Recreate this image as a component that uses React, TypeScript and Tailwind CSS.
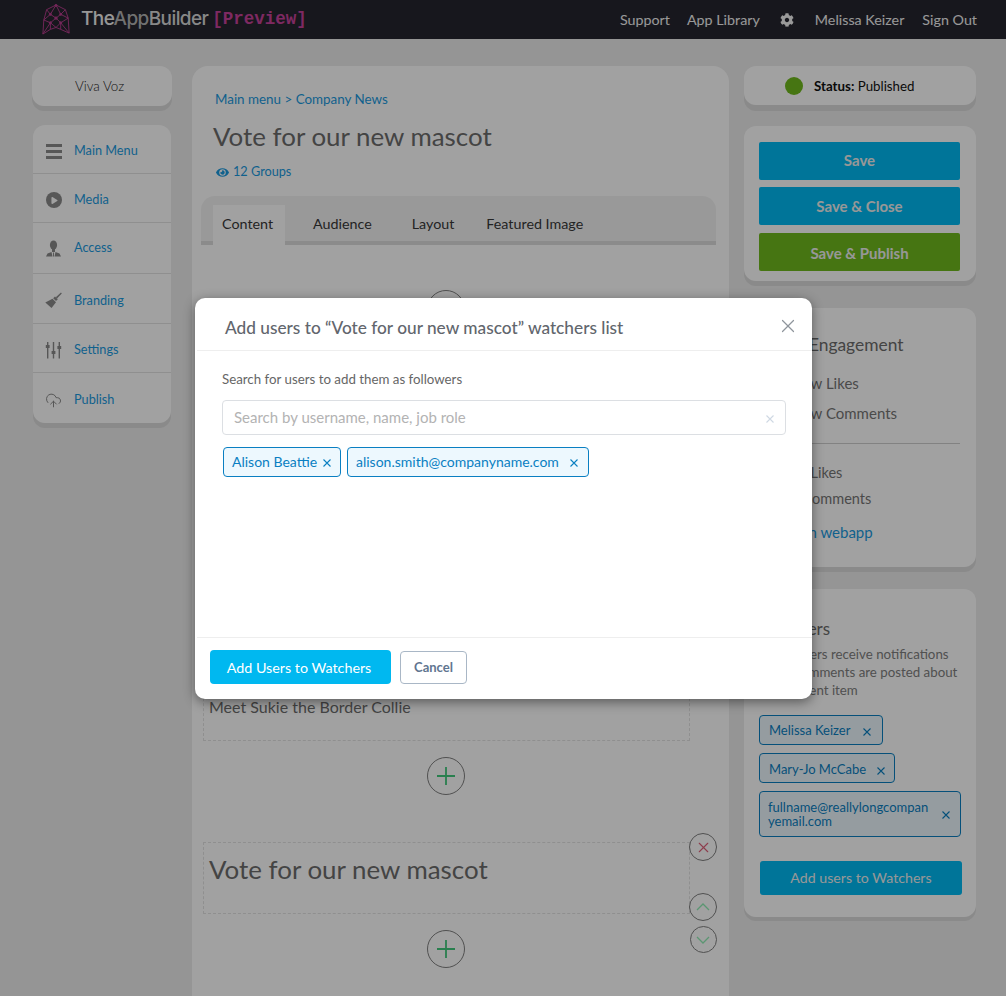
import { CloudUpload, X } from 'lucide-react';
import { FaCog, FaEye, FaPlay } from 'react-icons/fa';
import type { ReactNode } from 'react';

const Logo = () => (
  <svg width="30" height="31" viewBox="0 0 32 33" fill="none" stroke="#b83d8e" strokeWidth="1" className="shrink-0">
    <path d="M16 1 L26 6 L29 15 L30 31 L21 27 L16 25 L10 27 L2 32 L3 17 L6 6 Z" />
    <path d="M16 1 L10 11 L3 17 M16 1 L21 11 L29 15 M6 6 L10 11 L16 15 L21 11 L26 6 M3 17 L10 20 L16 15 L21 20 L29 15 M10 20 L16 25 L21 20 M10 20 L10 27 M21 20 L21 27 M2 32 L10 20 M30 31 L21 20" />
    <circle cx="16" cy="15" r="1.3" fill="#b83d8e" />
    <circle cx="10" cy="11" r="1.1" fill="#b83d8e" />
    <circle cx="21" cy="11" r="1.1" fill="#b83d8e" />
    <circle cx="16" cy="1.5" r="1.1" fill="#b83d8e" />
    <circle cx="21" cy="20" r="1.1" fill="#b83d8e" />
    <circle cx="10" cy="20" r="1.1" fill="#b83d8e" />
  </svg>
);

const Header = () => (
  <header className="flex h-[39px] items-center bg-[#25252f] pl-[41px] pr-[29px]">
    <Logo />
    <div className="ml-[10px] font-['Inter',sans-serif] text-[19px] font-medium tracking-[-0.6px]">
      <span className="text-[#f0f0f0]">The</span>
      <span className="text-[#b4b4b4]">App</span>
      <span className="text-[#d8d8d8]">Builder</span>
    </div>
    <div className="ml-[4px] font-['Liberation_Mono',monospace] text-[17.5px] font-bold text-[#c8429c]">[Preview]</div>
    <nav className="ml-auto flex items-center text-[14.3px] text-[#f2f2f2]">
      <span>Support</span>
      <span className="ml-[17px]">App Library</span>
      <FaCog className="ml-[20px] text-[14px]" />
      <span className="ml-[21px]">Melissa Keizer</span>
      <span className="ml-[18px]">Sign Out</span>
    </nav>
  </header>
);

const UserSuit = () => (
  <svg width="17" height="17" viewBox="0 0 17 17" fill="#8a8a8a">
    <ellipse cx="8.5" cy="5" rx="3.6" ry="4.6" />
    <rect x="7" y="9" width="3" height="3" />
    <path d="M1 16.5 L2.5 13.5 L6.5 12 L7.5 16.5 Z M16 16.5 L14.5 13.5 L10.5 12 L9.5 16.5 Z" />
    <rect x="8" y="12.5" width="1" height="4" />
  </svg>
);

const SlidersV = () => (
  <svg width="17" height="17" viewBox="0 0 17 17" fill="#8a8a8a">
    <rect x="2" y="0" width="1.4" height="16.5" />
    <rect x="7.8" y="0" width="1.4" height="16.5" />
    <rect x="13.6" y="0" width="1.4" height="16.5" />
    <rect x="0.8" y="3" width="3.8" height="3" />
    <rect x="6.6" y="9" width="3.8" height="3" />
    <rect x="12.4" y="4" width="3.8" height="3" />
  </svg>
);

const Brush = () => (
  <svg width="17" height="17" viewBox="0 0 17 17" fill="#8a8a8a">
    <path d="M16 0.5 L16.8 1.5 L12 6.5 L10.8 5.2 Z" />
    <path d="M10 4.5 L12.8 7.3 L11 9 L8.2 6.2 Z" />
    <path d="M7.5 6.8 L11 10.3 L6.5 16 L0.3 10.6 Z" />
  </svg>
);

const navItems: { label: string; icon: ReactNode; h: string; pt: string }[] = [
  {
    label: 'Main Menu',
    h: 'h-[49px]',
    pt: 'pt-[4px]',
    icon: (
      <div className="flex w-[16px] flex-col gap-[3px]">
        <div className="h-[3px] bg-[#8a8a8a]" />
        <div className="h-[3px] bg-[#8a8a8a]" />
        <div className="h-[3px] bg-[#8a8a8a]" />
      </div>
    ),
  },
  {
    label: 'Media',
    h: 'h-[49px]',
    pt: 'pt-[4px]',
    icon: (
      <div className="flex h-[16px] w-[16px] items-center justify-center rounded-full bg-[#8a8a8a]">
        <FaPlay className="ml-px text-[7px] text-white" />
      </div>
    ),
  },
  { label: 'Access', h: 'h-[51px]', pt: 'pt-0', icon: <UserSuit /> },
  { label: 'Branding', h: 'h-[50px]', pt: 'pt-[4px]', icon: <Brush /> },
  { label: 'Settings', h: 'h-[49px]', pt: 'pt-[4px]', icon: <SlidersV /> },
  { label: 'Publish', h: 'h-[50px]', pt: 'pt-[4px]', icon: <CloudUpload size={17} strokeWidth={1.4} className="text-[#8a8a8a]" /> },
];

const LeftColumn = () => (
  <aside className="w-[140px] shrink-0">
    <div className="flex h-[40px] items-center rounded-[12px] bg-white pl-[43px] pt-px text-[13.4px] font-light text-[#222] shadow-[0_5px_0_#dbdbdb]">
      Viva Voz
    </div>
    <div className="mx-px mt-[19px] rounded-[12px] bg-white shadow-[0_5px_0_#dbdbdb]">
      {navItems.map((item, i) => (
        <div
          key={item.label}
          className={`flex items-center ${item.h} ${item.pt} ${i < navItems.length - 1 ? 'border-b border-[#e2e2e2]' : ''}`}
        >
          <div className="flex w-[41px] shrink-0 justify-center">{item.icon}</div>
          <span className="text-[12.7px] text-[#1a9ae0]">{item.label}</span>
        </div>
      ))}
    </div>
  </aside>
);

const RoundBtn = ({ size, color, children }: { size: string; color: string; children: ReactNode }) => (
  <div className={`flex items-center justify-center rounded-full border-[1.5px] border-[#808080] ${size} ${color}`}>
    {children}
  </div>
);

const AddBlock = () => (
  <div className="flex justify-center">
    <RoundBtn size="h-[38px] w-[38px]" color="text-[#42c97c]">
      <svg width="20" height="20" viewBox="0 0 20 20" stroke="currentColor" strokeWidth="1.8">
        <path d="M10 1 V19 M1 10 H19" />
      </svg>
    </RoundBtn>
  </div>
);

const MainColumn = () => (
  <main className="ml-[20px] h-[931px] w-[537px] shrink-0 rounded-t-[16px] bg-white px-[9px] pt-[25px]">
    <div className="pl-[14px]">
      <div className="text-[13.4px] leading-[16px] text-[#1a9ae0]">Main menu &gt; Company News</div>
      <h1 className="-ml-[2px] mt-[11px] text-[25.9px] leading-[36px] text-[#6c6c6c]">Vote for our new mascot</h1>
      <div className="mt-[9px] flex h-[18px] items-center text-[12.7px] text-[#1a9ae0]">
        <FaEye className="ml-px text-[13px]" />
        <span className="ml-[4px]">12 Groups</span>
      </div>
    </div>
    <div className="mt-[15px] flex h-[49px] w-[515px] items-end rounded-t-[14px] border-b-[4px] border-[#dcdcdc] bg-[#f3f3f3] pl-[12px] text-[14.3px] text-[#383838]">
      <div className="-mb-[4px] flex h-[40px] w-[72px] items-center bg-white pb-[2px] pl-[9px]">Content</div>
      <div className="ml-[28px] flex h-[36px] items-center pt-[2px]">Audience</div>
      <div className="ml-[40px] flex h-[36px] items-center pt-[2px]">Layout</div>
      <div className="ml-[32px] flex h-[36px] items-center pt-[2px]">Featured Image</div>
    </div>
    <div className="mt-[45px] w-[490px]">
      <AddBlock />
    </div>
    <div className="mt-[47px] ml-[2px] flex h-[366px] w-[487px] items-end border border-dashed border-[#e2e2e2] pb-[23px] pl-[5px] text-[16px] leading-[20px] text-[#6c6c6c]">
      Meet Sukie the Border Collie
    </div>
    <div className="mt-[16px] w-[490px]">
      <AddBlock />
    </div>
    <div className="relative ml-[2px] mt-[47px] h-[72px] w-[487px] border border-dashed border-[#e2e2e2] pl-[5px] pt-[8px] text-[25.9px] leading-[36px] text-[#6c6c6c]">
      Vote for our new mascot
      <div className="absolute left-[485px] top-[-10px] flex flex-col items-center">
        <RoundBtn size="h-[28px] w-[28px]" color="text-[#e0607a]">
          <X size={17} strokeWidth={1.5} />
        </RoundBtn>
        <div className="mt-[32px]">
          <RoundBtn size="h-[28px] w-[28px]" color="text-[#90eeb5]">
            <svg width="14" height="8" viewBox="0 0 14 8" fill="none" stroke="currentColor" strokeWidth="1.3"><path d="M1 7 L7 1 L13 7" /></svg>
          </RoundBtn>
        </div>
        <div className="mt-[5px]">
          <RoundBtn size="h-[27px] w-[27px]" color="text-[#90eeb5]">
            <svg width="14" height="8" viewBox="0 0 14 8" fill="none" stroke="currentColor" strokeWidth="1.3"><path d="M1 1 L7 7 L13 1" /></svg>
          </RoundBtn>
        </div>
      </div>
    </div>
    <div className="mt-[16px] w-[490px]">
      <AddBlock />
    </div>
  </main>
);

const Tag = ({ children, className = '' }: { children: ReactNode; className?: string }) => (
  <div className={`flex items-center rounded-[4px] border border-[#0a7fc2] bg-[#edf8fe] text-[#0a7fc2] ${className}`}>
    {children}
  </div>
);

const TagX = ({ className = '' }: { className?: string }) => (
  <svg width="8" height="8" viewBox="0 0 8 8" stroke="currentColor" strokeWidth="1.1" className={`mt-[2px] shrink-0 ${className}`}>
    <path d="M0.5 0.5 L7.5 7.5 M7.5 0.5 L0.5 7.5" />
  </svg>
);

const SideButton = ({ label, color, className = '' }: { label: string; color: string; className?: string }) => (
  <div className={`flex h-[38px] items-center justify-center rounded-[2px] text-[15px] font-bold text-[#f0f0f0] ${color} ${className}`}>
    {label}
  </div>
);

const RightColumn = () => (
  <aside className="ml-[15px] w-[232px] shrink-0">
    <div className="flex h-[39px] items-center rounded-[12px] bg-white pl-[41px] text-[13.3px] text-[#111] shadow-[0_6px_0_#dbdbdb]">
      <div className="h-[18px] w-[18px] rounded-full bg-[#6fba1d]" />
      <span className="ml-[11px] mt-[2px]"><b>Status:</b> Published</span>
    </div>
    <div className="mt-[21px] flex h-[155px] flex-col gap-[7px] rounded-[12px] bg-white pl-[15px] pr-[16px] pt-[16px] shadow-[0_5px_0_#dbdbdb]">
      <SideButton label="Save" color="bg-[#00b9f2]" className="pb-[2px]" />
      <SideButton label="Save & Close" color="bg-[#00b9f2]" />
      <SideButton label="Save & Publish" color="bg-[#6fba1d]" className="mt-px pt-[2px]" />
    </div>
    <div className="mt-[27px] h-[259px] rounded-[12px] bg-white px-[16px] pt-[26px] shadow-[0_5px_0_#dbdbdb]">
      <div className="text-[17.4px] leading-[22px] text-[#6c6c6c]">Social Engagement</div>
      <div className="ml-[25px] mt-[17px] text-[15px] leading-[20px] text-[#767676]">Allow Likes</div>
      <div className="ml-[25px] mt-[10px] text-[15px] leading-[20px] text-[#767676]">Allow Comments</div>
      <div className="mt-[20px] border-t border-[#cfcfcf]" />
      <div className="ml-[30px] mt-[19px] text-[14.5px] leading-[20px] text-[#767676]">24 Likes</div>
      <div className="ml-[22px] mt-[6px] text-[14.5px] leading-[20px] text-[#767676]">12 Comments</div>
      <div className="ml-[8px] mt-[13px] text-[15px] leading-[20px] text-[#1a9ae0]">View in webapp</div>
    </div>
    <div className="mt-[22px] h-[328px] rounded-[12px] bg-white px-[15px] pt-[30px] shadow-[0_4px_0_#dbdbdb]">
      <div className="text-[17px] leading-[20px] text-[#6c6c6c]">Watchers</div>
      <div className="mt-[6px] text-[13.3px] leading-[18px] text-[#808080]">
        <span className="ml-[13px]">Watchers receive notifications</span><br />when comments are posted about<br />this content item
      </div>
      <div className="mt-[16px] flex flex-col items-start gap-[8px] text-[13px]">
        <Tag className="h-[30px] w-[124px] pl-[9px] pt-[2px]">
          Melissa Keizer
          <TagX className="ml-auto mr-[11px]" />
        </Tag>
        <Tag className="h-[30px] w-[136px] pl-[9px] pt-[3px]">
          Mary-Jo McCabe
          <TagX className="ml-auto mr-[9px]" />
        </Tag>
        <Tag className="h-[46px] w-[202px] pl-[8px] leading-[14px]">
          <span className="w-[165px] break-all">fullname@reallylongcompanyemail.com</span>
          <TagX className="ml-auto mr-[10px]" />
        </Tag>
      </div>
      <div className="ml-px mt-[24px] flex h-[34px] w-[202px] items-center justify-center rounded-[3px] bg-[#00b9f2] text-[14.2px] text-[#f0f0f0]">
        Add users to Watchers
      </div>
    </div>
  </aside>
);

const Modal = () => (
  <div className="absolute left-[195px] top-[298px] h-[401px] w-[617px] rounded-[10px] bg-white shadow-[0_3px_12px_rgba(0,0,0,0.45)]">
    <div className="ml-[2px] flex h-[53px] items-center border-b border-[#eeeeee] pl-[28px] pr-[13px]">
      <h2 className="mt-[7px] text-[17.25px] font-medium text-[#62666d]">Add users to “Vote for our new mascot” watchers list</h2>
      <X size={22} strokeWidth={1.3} className="ml-auto mt-[3px] text-[#8f959c]" />
    </div>
    <div className="px-[27px]">
      <div className="mt-[19px] text-[13.3px] leading-[18px] text-[#666]">Search for users to add them as followers</div>
      <div className="mt-[12px] flex h-[35px] w-[564px] items-center rounded-[4px] border border-[#dcdfe3] pl-[11px] pr-[11px] text-[15px] text-[#b3b3b3]">
        Search by username, name, job role
        <TagX className="ml-auto text-[#cfd8e3]" />
      </div>
      <div className="ml-px mt-[12px] flex gap-[6px] text-[14px]">
        <Tag className="h-[30px] w-[118px] pb-[2px] pl-[8px]">
          Alison Beattie
          <TagX className="ml-auto mr-[9px] mt-[4px]" />
        </Tag>
        <Tag className="h-[30px] w-[242px] pb-[2px] pl-[8px]">
          alison.smith@companyname.com
          <TagX className="ml-auto mr-[10px] mt-[4px]" />
        </Tag>
      </div>
    </div>
    <div className="ml-[2px] mt-[160px] flex h-[62px] items-start border-t border-[#eeeeee] pl-[13px] pt-[12px]">
      <div className="flex h-[34px] w-[181px] items-center justify-center rounded-[4px] bg-[#00b8f0] pr-[3px] pt-[2px] text-[14.3px] text-white">
        Add Users to Watchers
      </div>
      <div className="ml-[9px] mt-px flex h-[33px] w-[67px] items-center justify-center rounded-[4px] border border-[#a9b7c6] text-[13px] font-bold text-[#5f7590]">
        Cancel
      </div>
    </div>
  </div>
);

export default function App() {
  return (
    <div className="relative h-[996px] overflow-hidden bg-[#ececec] font-['Lato',sans-serif]">
      <Header />
      <div className="flex pl-[32px] pt-[27px]">
        <LeftColumn />
        <MainColumn />
        <RightColumn />
      </div>
      <div className="absolute inset-0 bg-black/[.37]" />
      <Modal />
    </div>
  );
}
